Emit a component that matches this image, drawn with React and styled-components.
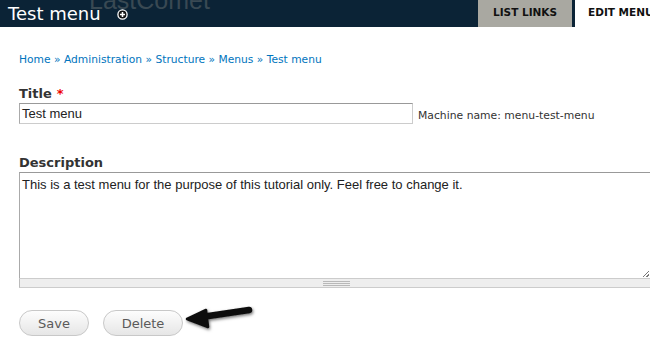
import React from 'react';
import styled, { createGlobalStyle } from 'styled-components';

const GlobalStyle = createGlobalStyle`
  html, body {
    margin: 0;
    padding: 0;
    background: #fff;
    overflow: hidden;
  }
  body {
    font-family: "DejaVu Sans", Verdana, sans-serif;
  }
`;

const Page = styled.div`
  width: 650px;
  height: 356px;
  overflow: hidden;
`;

const Header = styled.div`
  position: relative;
  height: 27px;
  background-color: #0b2336;
  display: flex;
  align-items: stretch;
  overflow: hidden;
`;

const Watermark = styled.span`
  position: absolute;
  left: 89px;
  top: -12px;
  font-family: "Liberation Sans", Arial, sans-serif;
  font-size: 25px;
  line-height: 25px;
  color: #394953;
`;

const PageTitle = styled.h1`
  position: relative;
  margin: 0;
  padding: 0 0 0 8px;
  font-size: 18px;
  font-weight: normal;
  line-height: 27px;
  color: #fff;
  display: flex;
  align-items: center;
  gap: 16px;
`;

const AddIcon = styled.span`
  display: inline-flex;
  width: 11px;
  height: 11px;
  margin-top: 2px;
`;

const Tabs = styled.div`
  margin-left: auto;
  display: flex;
  gap: 3px;
  position: relative;
`;

const Tab = styled.div`
  width: ${p => (p.$active ? '75px' : '94px')};
  padding-top: 6px;
  box-sizing: border-box;
  background: ${p => (p.$active ? '#fff' : '#a9a8a1')};
  color: #111;
  font-weight: bold;
  font-size: 10.5px;
  text-align: ${p => (p.$active ? 'left' : 'center')};
  padding-left: ${p => (p.$active ? '13px' : '0')};
  white-space: nowrap;
`;

const Content = styled.div`
  padding: 0 0 0 19px;
`;

const Breadcrumb = styled.div`
  margin-top: 26px;
  font-size: 10.7px;
  line-height: 14px;
  color: #0074bd;
`;

const Label = styled.label`
  display: block;
  font-size: 13px;
  font-weight: bold;
  color: #333;
  line-height: 16px;
  margin-top: ${p => p.$top};
  margin-bottom: 1px;
`;

const Required = styled.span`
  color: #e00;
  margin-left: 5px;
`;

const FieldRow = styled.div`
  display: flex;
  align-items: center;
  gap: 5px;
`;

const TextInput = styled.div`
  width: 394px;
  height: 21px;
  box-sizing: border-box;
  border: 1px solid #ccc;
  border-top-color: #999;
  border-left-color: #aaa;
  font-family: "Liberation Sans", Arial, sans-serif;
  font-size: 13px;
  line-height: 19px;
  padding-left: 2px;
  color: #222;
`;

const Hint = styled.span`
  font-size: 10.8px;
  color: #333;
  margin-top: 3px;
`;

const TextArea = styled.div`
  width: 640px;
  height: 106px;
  box-sizing: border-box;
  border: 1px solid #ccc;
  border-top-color: #999;
  border-left-color: #aaa;
  border-bottom: none;
  font-family: "Liberation Sans", Arial, sans-serif;
  font-size: 13px;
  line-height: 18px;
  padding: 3px 2px;
  color: #222;
  position: relative;
`;

const ResizeCorner = styled.span`
  position: absolute;
  right: 9px;
  bottom: 1px;
  width: 6px;
  height: 6px;
  background: linear-gradient(135deg, transparent 45%, #777 45%, #777 55%, transparent 55%, transparent 75%, #777 75%, #777 85%, transparent 85%);
`;

const Grippie = styled.div`
  width: 640px;
  height: 10px;
  box-sizing: border-box;
  background: #eee;
  border: 1px solid #ccc;
  border-left-color: #bbb;
  display: flex;
  align-items: center;
  padding-left: 303px;
`;

const GripLines = styled.span`
  display: block;
  width: 27px;
  height: 5px;
  background: repeating-linear-gradient(to bottom, #b9b9b9 0, #b9b9b9 1px, transparent 1px, transparent 2px);
`;

const Actions = styled.div`
  margin-top: 22px;
  display: flex;
  align-items: center;
  gap: 14px;
`;

const Button = styled.button`
  width: ${p => p.$w};
  height: 26px;
  border: 1px solid #c8c8c8;
  border-radius: 13px;
  background: linear-gradient(to bottom, #fdfdfd, #e6e6e6);
  font-family: "DejaVu Sans", Verdana, sans-serif;
  font-size: 13px;
  color: #5a5a5a;
  padding: 0;
`;

const Arrow = styled.svg`
  margin-left: -13px;
  margin-top: -6px;
`;

export default function App() {
  return (
    <Page>
      <GlobalStyle />
      <Header>
        <Watermark>LastComet</Watermark>
        <PageTitle>
          Test menu
          <AddIcon>
            <svg width="11" height="11" viewBox="0 0 11 11">
              <circle cx="5.5" cy="5.5" r="4.6" fill="#111" stroke="#fff" strokeWidth="1.3" />
              <path d="M5.5 3v5M3 5.5h5" stroke="#fff" strokeWidth="1.6" />
            </svg>
          </AddIcon>
        </PageTitle>
        <Tabs>
          <Tab>LIST LINKS</Tab>
          <Tab $active>EDIT MENU</Tab>
        </Tabs>
      </Header>
      <Content>
        <Breadcrumb>Home » Administration » Structure » Menus » Test menu</Breadcrumb>
        <Label $top="19px">
          Title<Required>*</Required>
        </Label>
        <FieldRow>
          <TextInput>Test menu</TextInput>
          <Hint>Machine name: menu-test-menu</Hint>
        </FieldRow>
        <Label $top="31px">Description</Label>
        <TextArea>
          This is a test menu for the purpose of this tutorial only. Feel free to change it.
          <ResizeCorner />
        </TextArea>
        <Grippie>
          <GripLines />
        </Grippie>
        <Actions>
          <Button $w="70px">Save</Button>
          <Button $w="80px">Delete</Button>
          <Arrow width="74" height="28" viewBox="0 0 74 28">
            <defs>
              <filter id="sh" x="-20%" y="-40%" width="140%" height="180%">
                <feDropShadow dx="1" dy="1.5" stdDeviation="1.4" floodColor="#000" floodOpacity="0.55" />
              </filter>
            </defs>
            <g filter="url(#sh)">
              <path d="M65 4 L21 10.5" stroke="#111" strokeWidth="6.5" strokeLinecap="round" />
              <path d="M3 13 L22 4 L24 21 Z" fill="#111" strokeLinejoin="round" stroke="#111" strokeWidth="2.5" />
            </g>
          </Arrow>
        </Actions>
      </Content>
    </Page>
  );
}
